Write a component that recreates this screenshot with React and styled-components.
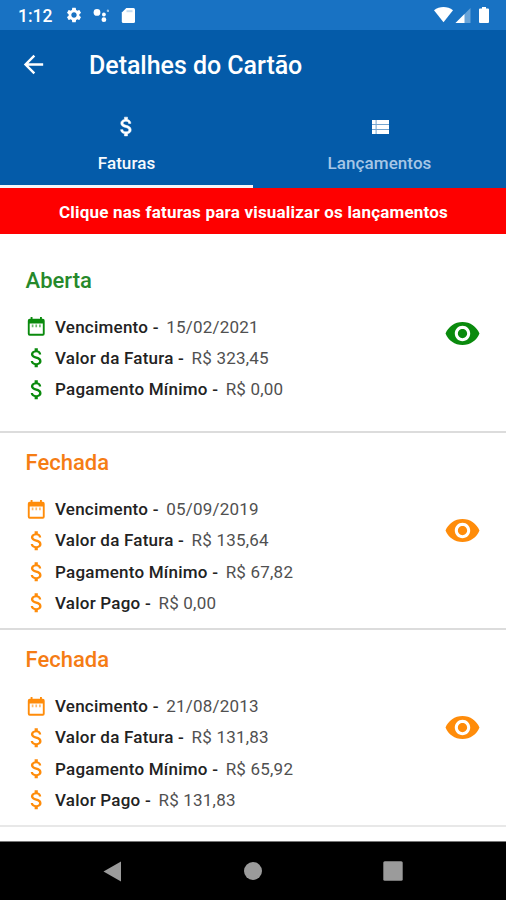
import React from "react";
import styled, { createGlobalStyle } from "styled-components";
import {
    MdArrowBack,
    MdAttachMoney,
    MdSettings,
    MdVisibility,
} from "react-icons/md";

const invoices = [
    {
        status: "Aberta",
        color: "#0a8a0d",
        titleColor: "#26892b",
        rows: [
            ["Vencimento", "15/02/2021"],
            ["Valor da Fatura", "R$ 323,45"],
            ["Pagamento Mínimo", "R$ 0,00"],
        ],
    },
    {
        status: "Fechada",
        color: "#ff8c0a",
        titleColor: "#f57c14",
        rows: [
            ["Vencimento", "05/09/2019"],
            ["Valor da Fatura", "R$ 135,64"],
            ["Pagamento Mínimo", "R$ 67,82"],
            ["Valor Pago", "R$ 0,00"],
        ],
    },
    {
        status: "Fechada",
        color: "#ff8c0a",
        titleColor: "#f57c14",
        rows: [
            ["Vencimento", "21/08/2013"],
            ["Valor da Fatura", "R$ 131,83"],
            ["Pagamento Mínimo", "R$ 65,92"],
            ["Valor Pago", "R$ 131,83"],
        ],
    },
];

const CalendarIcon = () => (
    <svg width="22.5" height="22.5" viewBox="0 0 24 24" fill="currentColor">
        <path d="M19 4h-1V2h-2v2H8V2H6v2H5a2 2 0 0 0-2 2v14a2 2 0 0 0 2 2h14a2 2 0 0 0 2-2V6a2 2 0 0 0-2-2zm0 16H5V9h14z" />
        <path d="M7.2 10h1.8v3H7.2zM11.1 10h1.8v3h-1.8zM15 10h1.8v3H15z" opacity="0.6" />
    </svg>
);

const ListIcon = () => (
    <svg width="22" height="22" viewBox="0 0 22 22" fill="currentColor">
        <path d="M3 4h17v14H3z" opacity="0.45" />
        <path d="M3 4h3.6v4H3zM3 9h3.6v4H3zM3 14h3.6v4H3zM7.6 4H20v4H7.6zM7.6 9H20v4H7.6zM7.6 14H20v4H7.6z" />
    </svg>
);

const StatusBar = () => (
    <Status>
        <Clock>1:12</Clock>
        <StatusLeft>
            <MdSettings size={18} />
            <svg width="16" height="16" viewBox="0 0 16 16" fill="currentColor">
                <circle cx="4" cy="5.4" r="3.4" />
                <circle cx="10.9" cy="7.5" r="1.9" />
                <circle cx="10.9" cy="12.7" r="2.4" />
                <circle cx="14.9" cy="3.8" r="1.2" opacity="0.6" />
            </svg>
            <svg width="19" height="19" viewBox="0 0 19 19" fill="currentColor">
                <path d="M7.3 2H14.5a1.5 1.5 0 0 1 1.5 1.5v12a1.5 1.5 0 0 1-1.5 1.5H4.3a1.5 1.5 0 0 1-1.5-1.5V6.5z" />
                <path d="M7.5 4.2h6v2h-6z" fill="#1872c3" opacity="0.25" />
            </svg>
        </StatusLeft>
        <svg width="57" height="18" viewBox="0 0 57 18" fill="currentColor">
            <path d="M0 4.2C5.5-.2 13.5-.2 19 4.2L9.5 16.2z" />
            <path d="M36.5 2v15H21.5z" opacity="0.35" />
            <path d="M30.5 8v9H21.5z" />
            <path d="M48 1h4v1.6h2a1 1 0 0 1 1 1V16a1 1 0 0 1-1 1h-8a1 1 0 0 1-1-1V3.6a1 1 0 0 1 1-1h2z" />
        </svg>
    </Status>
);

const Invoice = ({ status, color, titleColor, rows }) => (
    <Card>
        <Details>
            <CardTitle $color={titleColor}>{status}</CardTitle>
            {rows.map(([label, value], i) => (
                <Row key={label}>
                    <RowIcon $color={color}>
                        {i === 0 ? <CalendarIcon /> : <MdAttachMoney size={25.5} />}
                    </RowIcon>
                    <Label>{label} -</Label>
                    <Value>{value}</Value>
                </Row>
            ))}
        </Details>
        <ViewButton $color={color} aria-label="Visualizar">
            <MdVisibility size={37} />
        </ViewButton>
    </Card>
);

const App = () => {
    return (
        <Page>
            <GlobalStyle />
            <StatusBar />
            <Header>
                <MdArrowBack size={29} />
                <Title>Detalhes do Cartão</Title>
            </Header>
            <Tabs>
                <Tab $active>
                    <MoneyTabIcon size={25} />
                    <TabLabel>Faturas</TabLabel>
                </Tab>
                <Tab>
                    <ListIcon />
                    <TabLabel $dim>Lançamentos</TabLabel>
                </Tab>
            </Tabs>
            <Banner>Clique nas faturas para visualizar os lançamentos</Banner>
            <List>
                {invoices.map((invoice, i) => (
                    <Invoice key={i} {...invoice} />
                ))}
            </List>
            <NavBar>
                <svg width="20" height="21" viewBox="0 0 20 21">
                    <path d="M18 .5v20L.5 10.5z" />
                </svg>
                <svg width="18" height="18" viewBox="0 0 18 18">
                    <circle cx="9" cy="9" r="9" />
                </svg>
                <svg width="20" height="20" viewBox="0 0 20 20">
                    <rect x="0.3" y="0.3" width="19.4" height="19.4" rx="1.5" />
                </svg>
            </NavBar>
        </Page>
    );
};

export default App;

const GlobalStyle = createGlobalStyle`
  body {
    margin: 0;
    background: #fff;
    font-family: Roboto, "Liberation Sans", sans-serif;
  }
  svg {
    display: block;
    flex-shrink: 0;
  }
`;

const Page = styled.div`
  width: 506px;
  height: 900px;
  display: flex;
  flex-direction: column;
  overflow: hidden;
  background-color: white;
`;

const Status = styled.div`
  height: 30px;
  flex-shrink: 0;
  display: flex;
  align-items: center;
  padding: 0 15px 0 18px;
  box-sizing: border-box;
  background-color: #1872c3;
  color: white;
`;

const Clock = styled.span`
  width: 47px;
  font-size: 17.5px;
  font-weight: 500;
  line-height: 30px;
  padding-top: 2px;
`;

const StatusLeft = styled.div`
  flex: 1;
  display: flex;
  align-items: center;
  gap: 10px;
`;

const Header = styled.div`
  height: 72px;
  flex-shrink: 0;
  display: flex;
  align-items: center;
  gap: 41px;
  padding: 0 19px 3px;
  box-sizing: border-box;
  background-color: #045ba9;
  color: white;
`;

const Title = styled.h1`
  margin: 2px 0 0;
  font-size: 25px;
  font-weight: 500;
  letter-spacing: -0.04px;
`;

const Tabs = styled.div`
  height: 86px;
  flex-shrink: 0;
  display: flex;
  background-color: #045ba9;
`;

const Tab = styled.div`
  flex: 1;
  display: flex;
  flex-direction: column;
  align-items: center;
  justify-content: flex-end;
  color: white;
  border-bottom: 3px solid ${(props) => (props.$active ? "#f4f5fa" : "transparent")};

  svg {
    margin: auto 0;
  }
`;

// thicker than the row icons; the icon's empty bounding path stays unstroked
const MoneyTabIcon = styled(MdAttachMoney)`
  path:not([fill="none"]) {
    stroke: currentColor;
    stroke-width: 0.5px;
  }
  path[fill="none"] {
    stroke: none;
  }
`;

const TabLabel = styled.span`
  margin-bottom: 9px;
  font-size: 17px;
  font-weight: 500;
  line-height: 25px;
  letter-spacing: 0.07px;
  color: ${(props) => (props.$dim ? "#a5c6e6" : "#f6f9fd")};
`;

const Banner = styled.div`
  height: 46px;
  flex-shrink: 0;
  display: flex;
  align-items: center;
  justify-content: center;
  padding: 1px 0 0 1px;
  box-sizing: border-box;
  background-color: #fe0000;
  color: white;
  font-size: 17px;
  font-weight: 700;
  letter-spacing: 0.2px;
  white-space: nowrap;
`;

const List = styled.div`
  flex: 1;
  padding-top: 2px;
`;

const Details = styled.div`
  display: flex;
  flex-direction: column;
  margin-top: 1.2px;
`;

const Card = styled.div`
  height: 197px;
  display: flex;
  align-items: center;
  justify-content: space-between;
  padding: 0 25px;
  box-sizing: border-box;
  border-bottom: 2px solid #dcdcdc;

  &:first-child ${Details} {
    margin: 0 0 1.2px;
  }
  &:last-child {
    border-color: #e8e8e8;
  }
`;

const CardTitle = styled.h2`
  margin: 0 0 10px 0.6px;
  font-size: 22px;
  font-weight: 500;
  line-height: 40px;
  color: ${(props) => props.$color};
`;

const Row = styled.div`
  height: 31.4px;
  display: flex;
  align-items: center;
  font-size: 17px;
  white-space: pre;
`;

const RowIcon = styled.span`
  width: 23px;
  margin-right: 7px;
  display: flex;
  justify-content: center;
  color: ${(props) => props.$color};
`;

const Label = styled.span`
  font-weight: 500;
  letter-spacing: 0.23px;
  color: #222;
  margin-right: 7.5px;
`;

const Value = styled.span`
  letter-spacing: 0.21px;
  color: #505050;
`;

const ViewButton = styled.button`
  padding: 0;
  border: none;
  background: none;
  color: ${(props) => props.$color};
`;

const NavBar = styled.div`
  height: 59px;
  flex-shrink: 0;
  display: flex;
  align-items: center;
  justify-content: space-between;
  padding: 0 103px;
  box-sizing: border-box;
  border-top: 1px solid #777;
  background-color: black;
  fill: #9b9b9b;
`;
